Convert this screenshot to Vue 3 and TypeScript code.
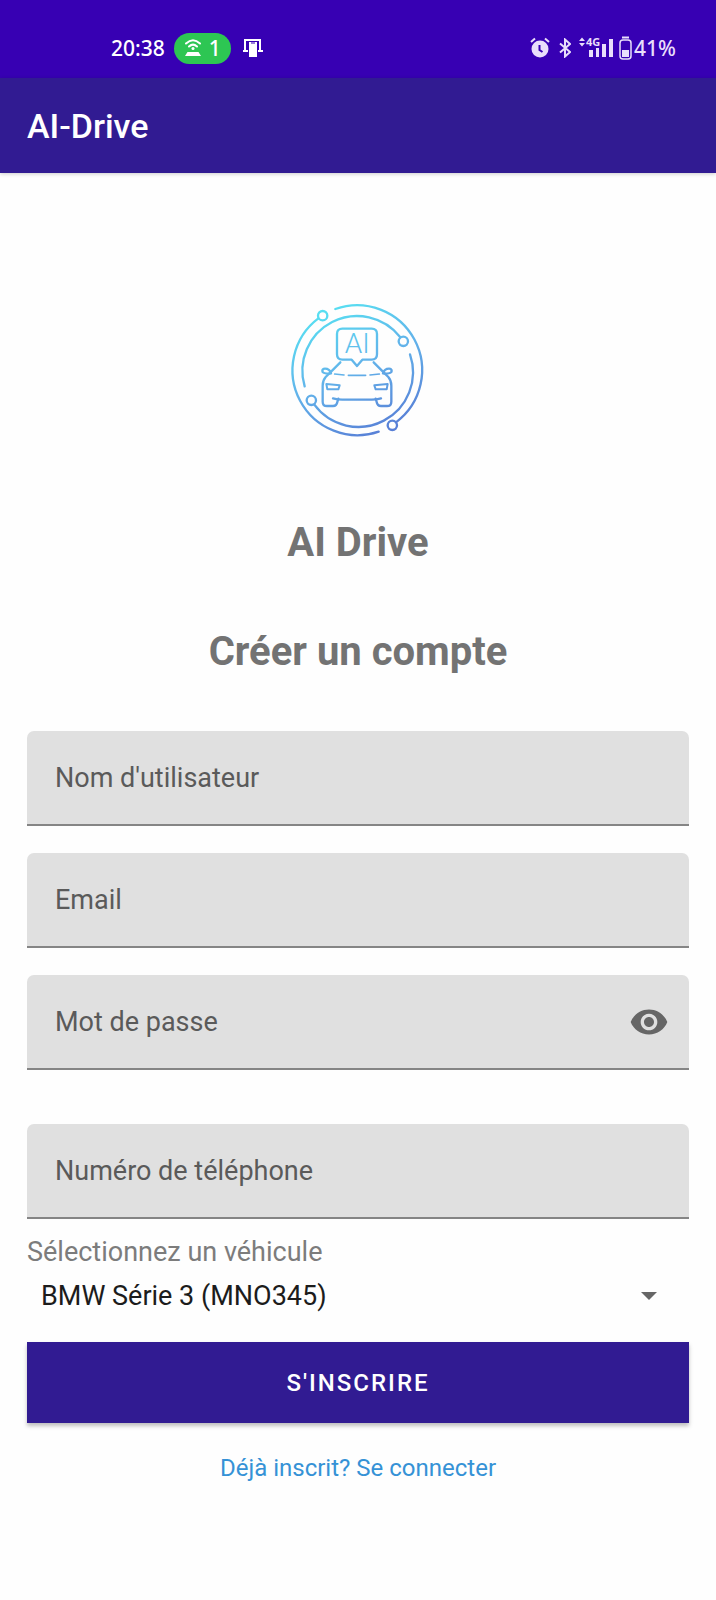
<script setup lang="ts">
import { ref } from 'vue'

interface Field {
  id: string
  label: string
  type: string
}

const fields: Field[] = [
  { id: 'username', label: "Nom d'utilisateur", type: 'text' },
  { id: 'email', label: 'Email', type: 'email' },
  { id: 'password', label: 'Mot de passe', type: 'password' },
  { id: 'phone', label: 'Numéro de téléphone', type: 'tel' },
]

const values = ref<Record<string, string>>({ username: '', email: '', password: '', phone: '' })
const showPassword = ref(false)
const vehicles = ['BMW Série 3 (MNO345)']
const vehicle = ref(vehicles[0])

function inputType(field: Field): string {
  return field.id === 'password' && showPassword.value ? 'text' : field.type
}
</script>

<template>
  <div class="screen">
    <div class="status">
      <div class="status-group">
        <span>20:38</span>
        <span class="hotspot">
          <svg width="18" height="20" viewBox="0 0 18 20" fill="none" stroke="#fff" stroke-width="2" stroke-linecap="round">
            <path d="M2 5.500Q9-1 16 5.500M5 8.500Q9 4.800 13 8.500" />
            <circle cx="9" cy="10.500" r="1.500" fill="#fff" stroke="none" />
            <path d="M3.500 14h11l2.500 4H1z" fill="#fff" stroke="none" />
          </svg>
          <span>1</span>
        </span>
        <svg class="cast" width="22" height="20" viewBox="0 0 22 20">
          <path d="M3 12V2h15v10M1 13h5M16 13h5" fill="none" stroke="#fff" stroke-width="2" />
          <path d="M7 4h8v15H7z" fill="#fff" />
          <path d="M9 5h4" stroke="#3700b3" stroke-width="1" />
        </svg>
      </div>
      <div class="status-group right">
        <svg width="20" height="22" viewBox="0 0 20 22">
          <circle cx="10" cy="12" r="8.500" fill="#e9defb" />
          <path d="M1 5l4-3.500M19 5l-4-3.500" stroke="#e9defb" stroke-width="2" />
          <path d="M9.500 8v5l3 2" fill="none" stroke="#3700b3" stroke-width="2" />
        </svg>
        <svg class="bluetooth" width="12" height="20" viewBox="0 0 12 20" fill="none" stroke="#e9defb" stroke-width="2">
          <path d="M1 5.500l10 8.500-5 4.500V1.500L11 6 1 14.500" />
        </svg>
        <svg class="signal" width="36" height="32" viewBox="0 -5 36 32" fill="#e9defb">
          <path d="M0 4l3-3.500L6 4zM0 6h6L3 9.500z" />
          <text class="network" x="7" y="9">4G</text>
          <path d="M10 13h4v7h-4zM17 11h3v9h-3zM23 7h4v13h-4zM30 2h4v18h-4z" />
        </svg>
        <svg width="13" height="24" viewBox="0 0 13 24">
          <rect x="1" y="4" width="11" height="19" rx="3" fill="none" stroke="#e9defb" stroke-width="1.500" />
          <path d="M3 1.500h7" stroke="#e9defb" stroke-width="2" />
          <path d="M3 14h7v7H3z" fill="#e9defb" />
        </svg>
        <span class="battery">41%</span>
      </div>
    </div>

    <header class="appbar">AI-Drive</header>

    <main class="content">
      <svg class="logo" viewBox="-7 -3 540 540" role="img" aria-label="AI Drive">
        <defs>
          <linearGradient id="brand" gradientUnits="userSpaceOnUse" x1="150" y1="80" x2="330" y2="460">
            <stop offset="0" stop-color="#57e2f2" />
            <stop offset="0.500" stop-color="#62b2ea" />
            <stop offset="1" stop-color="#587fd6" />
          </linearGradient>
        </defs>
        <g fill="none" stroke="url(#brand)" stroke-width="7" stroke-linecap="round" stroke-linejoin="round">
          <path d="M195 84A195 195 0 0 1 377 424" />
          <path d="M325 452A195 195 0 0 1 144 112" />
          <path d="M103 316A164 164 0 0 1 390 169" />
          <path d="M419 220A164 164 0 0 1 132 371" />
          <circle cx="157" cy="104" r="14" />
          <circle cx="399" cy="181" r="14" />
          <circle cx="123" cy="358" r="14" />
          <circle cx="366" cy="433" r="14" />
          <path d="M216 143h88q16 0 16 16v61q0 16-16 16h-28l-16 19-16-19h-28q-16 0-16-16v-61q0-16 16-16z" />
          <path d="M210 244l-30 30-14 14q-9 10-9 26v48q0 13 13 13h18q11 0 13-12l3-10M310 244l30 30 14 14q9 10 9 26v48q0 13-13 13h-18q-11 0-13-12l-3-10" />
          <path d="M188 352q14 4 28 4h88q14 0 28-4" />
          <path d="M182 277q-4-14-18-14-8 0-8 7 0 8 22 8M338 277q4-14 18-14 8 0 8 7 0 8-22 8" />
          <path d="M193 279l28 3M234 283h52M299 282l28-3" stroke-width="5" />
          <path d="M168 309l40 4-4 12h-33zM352 309l-40 4 4 12h33z" stroke-width="6" />
        </g>
        <text class="logo-text" x="261" y="217" text-anchor="middle" fill="url(#brand)">AI</text>
      </svg>

      <h1 class="title">AI Drive</h1>
      <h2 class="title subtitle">Créer un compte</h2>

      <form class="form" @submit.prevent>
        <div v-for="field in fields" :key="field.id" class="field" :class="field.id">
          <input :id="field.id" v-model="values[field.id]" :type="inputType(field)" :placeholder="field.label" :aria-label="field.label" />
          <button
            v-if="field.id === 'password'"
            type="button"
            class="eye"
            aria-label="Afficher le mot de passe"
            @click="showPassword = !showPassword"
          >
            <svg width="40" height="40" viewBox="0 0 24 24" fill="#666">
              <path d="M12 4.500C7 4.500 2.730 7.610 1 12c1.730 4.390 6 7.500 11 7.500s9.270-3.110 11-7.500c-1.730-4.390-6-7.500-11-7.500zM12 17c-2.760 0-5-2.240-5-5s2.240-5 5-5 5 2.240 5 5-2.240 5-5 5zm0-8c-1.660 0-3 1.340-3 3s1.340 3 3 3 3-1.340 3-3-1.340-3-3-3z" />
            </svg>
          </button>
        </div>

        <label class="select-label" for="vehicle">Sélectionnez un véhicule</label>
        <div class="select-wrap">
          <select id="vehicle" v-model="vehicle">
            <option v-for="item in vehicles" :key="item" :value="item">{{ item }}</option>
          </select>
          <svg class="caret" width="16" height="8" viewBox="0 0 16 8" fill="#666"><path d="M0 0h16L8 8z" /></svg>
        </div>

        <button type="submit" class="submit">S'INSCRIRE</button>
        <a class="login" href="#">Déjà inscrit? Se connecter</a>
      </form>
    </main>
  </div>
</template>

<style>
body {
  background: #fefefe;
}
</style>

<style scoped>
.screen {
  font-family: Roboto, "Liberation Sans", sans-serif;
  color: #737373;
}
.screen * {
  box-sizing: border-box;
}
.status {
  display: flex;
  justify-content: space-between;
  height: 78px;
  padding: 18px 40px 0 111px;
  background: #3700b3;
  color: #fff;
  font: 500 21px/28px "Noto Sans", sans-serif;
}
.status-group {
  display: flex;
  align-items: center;
  height: 60px;
}
.hotspot {
  display: flex;
  align-items: center;
  gap: 7px;
  height: 31px;
  margin-left: 9px;
  padding: 0 10px;
  border-radius: 16px;
  background: #2dc653;
}
.cast {
  margin-left: 11px;
}
.right {
  color: #e9defb;
}
.bluetooth {
  margin-left: 9px;
}
.signal {
  margin: 0 4px 0 8px;
}
.network {
  font-size: 11px;
  font-weight: 700;
}
.battery {
  margin-left: 2px;
}
.appbar {
  display: flex;
  align-items: center;
  height: 95px;
  padding: 0 27px;
  background: #311b92;
  box-shadow: 0 1px 4px rgba(0, 0, 0, 0.2);
  color: #fff;
  font-size: 34px;
  font-weight: 500;
}
.content {
  display: flex;
  flex-direction: column;
  align-items: center;
  padding: 107px 27px 0;
}
.logo {
  width: 180px;
  height: 180px;
}
.logo-text {
  font-size: 84px;
  font-weight: 300;
}
.title {
  margin: 59px 0 0;
  font-size: 40px;
  line-height: 48px;
  font-weight: 700;
}
.subtitle {
  margin-top: 61px;
}
.form {
  display: flex;
  flex-direction: column;
  width: 100%;
  margin-top: 55px;
}
.field {
  display: flex;
  align-items: center;
  height: 95px;
  margin-bottom: 27px;
  border-bottom: 2px solid #858585;
  border-radius: 7px 7px 0 0;
  background: #e0e0e0;
}
.field.password {
  margin-bottom: 54px;
}
.field.phone {
  margin-bottom: 17px;
}
.field input {
  flex: 1;
  min-width: 0;
  height: 100%;
  padding: 0 28px;
  border: 0;
  outline: 0;
  background: none;
  color: #212121;
  font: 400 27px Roboto, sans-serif;
}
.field input::placeholder {
  color: #5a5a5a;
  opacity: 1;
}
.eye {
  display: flex;
  margin-right: 20px;
  padding: 0;
  border: 0;
  background: none;
}
.select-label {
  font-size: 27px;
  line-height: 32px;
  color: #7c7c7c;
}
.select-wrap {
  display: grid;
  align-items: center;
  height: 56px;
}
.select-wrap > * {
  grid-area: 1 / 1;
}
.select-wrap select {
  width: 100%;
  height: 56px;
  padding: 0 60px 0 14px;
  border: 0;
  appearance: none;
  background: none;
  color: #1c1c1c;
  font: 400 27px Roboto, sans-serif;
}
.caret {
  justify-self: end;
  margin-right: 32px;
  pointer-events: none;
}
.submit {
  height: 81px;
  margin-top: 18px;
  border: 0;
  background: #311b92;
  box-shadow: 0 3px 4px rgba(0, 0, 0, 0.25);
  color: #fff;
  font: 500 24px Roboto, sans-serif;
  letter-spacing: 2px;
}
.login {
  align-self: center;
  margin-top: 30px;
  color: #3592d6;
  font-size: 24px;
  line-height: 30px;
  text-decoration: none;
}
</style>
